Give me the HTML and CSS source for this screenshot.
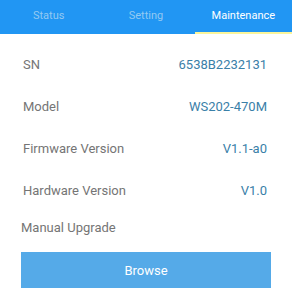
FILE: index.html
```html
<!DOCTYPE html>
<html lang="en">

<head>
  <meta charset="UTF-8" />
  <title>Maintenance</title>
  <link rel="stylesheet" href="styles.css">
</head>

<body>

  <div class="tabs">
    <a href="#" class="tab">Status</a>
    <a href="#" class="tab">Setting</a>
    <a href="#" class="tab active">Maintenance</a>
  </div>

  <div class="info-list">
    <div class="info-row">
      <span class="label">SN</span>
      <span class="value">6538B2232131</span>
    </div>
    <div class="info-row">
      <span class="label">Model</span>
      <span class="value">WS202-470M</span>
    </div>
    <div class="info-row">
      <span class="label">Firmware Version</span>
      <span class="value">V1.1-a0</span>
    </div>
    <div class="info-row">
      <span class="label">Hardware Version</span>
      <span class="value">V1.0</span>
    </div>
  </div>

  <div class="upgrade">
    <div class="upgrade-title">Manual Upgrade</div>
    <button class="browse-btn">Browse</button>
  </div>

</body>

</html>
```

FILE: styles.css
```css
body {
  font-family: Roboto, 'Noto Sans', sans-serif;
  background: #ffffff;
  margin: 0;
  padding: 0;
}

.tabs {
  display: flex;
  background: #2196f3;
  height: 34px;
}

.tab {
  flex: 1;
  display: flex;
  justify-content: center;
  align-items: center;
  padding-bottom: 2px;
  font-size: 11px;
  color: #93c9f2;
  text-decoration: none;
  border-bottom: 2px solid transparent;
  box-sizing: border-box;
}

.tab.active {
  color: #ffffff;
  border-bottom-color: #fbf59a;
}

.info-list {
  margin-top: 9px;
  padding: 0 25px 0 23px;
}

.info-row {
  display: flex;
  justify-content: space-between;
  align-items: center;
  height: 42px;
  font-size: 13px;
}

.label {
  color: #757575;
}

.value {
  color: #3a80a8;
}

.upgrade {
  padding: 0 21px;
}

.upgrade-title {
  font-size: 13px;
  color: #757575;
  line-height: 16px;
  margin-top: 9px;
}

.browse-btn {
  display: block;
  width: 100%;
  height: 36px;
  margin-top: 16px;
  border: none;
  border-radius: 0;
  background: #55aae8;
  color: #ffffff;
  font-family: inherit;
  font-size: 13px;
}
```
